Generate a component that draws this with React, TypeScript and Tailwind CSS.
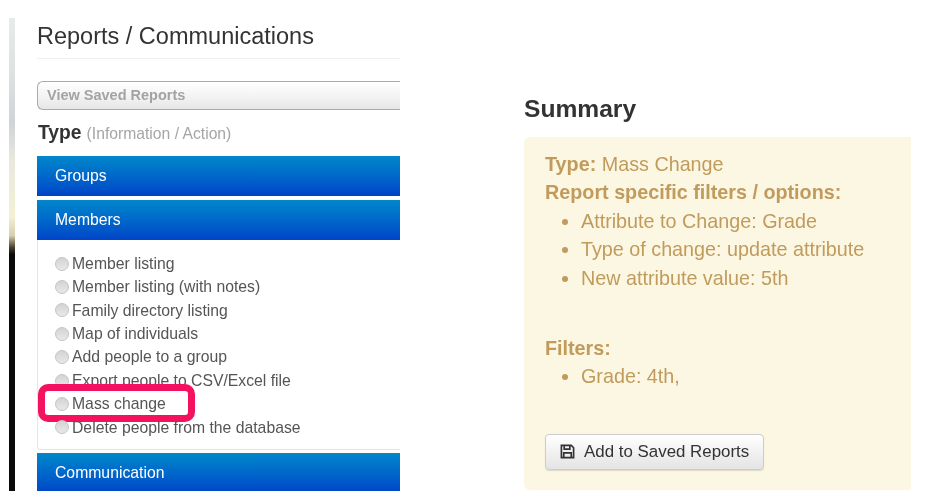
const memberReports = [
  "Member listing",
  "Member listing (with notes)",
  "Family directory listing",
  "Map of individuals",
  "Add people to a group",
  "Export people to CSV/Excel file",
  "Mass change",
  "Delete people from the database",
];

function CategoryBar({ label }: { label: string }) {
  return (
    <div className="flex h-[40px] shrink-0 items-center bg-gradient-to-b from-[#0487cb] to-[#0043c8] pl-[18px] text-[15.75px] text-white">
      {label}
    </div>
  );
}

function Radio() {
  return (
    <span className="h-[14px] w-[14px] shrink-0 rounded-full border border-[#c4c4c4] bg-gradient-to-b from-[#d4d4d4] to-[#e8e8e8]" />
  );
}

export default function App() {
  return (
    <div className="flex h-[502px] w-[925px] overflow-hidden bg-white pl-[9px] font-['Liberation_Sans',Arial,sans-serif] blur-[0.3px]">
      {/* background sliver */}
      <div className="mt-[18px] h-[473px] w-[6px] shrink-0 bg-[linear-gradient(to_bottom,#e6ece8_0%,#dde2e1_12%,#d0d3d8_22%,#e8e8de_30%,#f4f0d4_42%,#d6cfb0_46%,#4a4030_48.5%,#0a0a0a_50%,#0a0a0a_100%)]" />

      {/* LEFT */}
      <div className="ml-[22px] h-[491px] w-[363px] shrink-0 overflow-hidden">
        <h1 className="mt-[22px] h-[29px] text-[23.5px] leading-[29px] whitespace-nowrap text-[#333]">
          Reports / Communications
        </h1>
        <div className="mt-[7px] h-px bg-[#eeeeee]" />

        <div className="mt-[22px] flex h-[29px] items-center rounded-l-[6px] border border-r-0 border-[#aaaaaa] bg-gradient-to-b from-[#ffffff] via-[#f4f4f4] to-[#e6e6e6] pl-[9px] text-[14.5px] font-bold text-[#a3a3a3]">
          View Saved Reports
        </div>

        <div className="mt-[10px] flex h-[25px] items-baseline gap-[5px] pl-px leading-[25px] whitespace-nowrap">
          <span className="text-[19.3px] font-bold text-[#333]">Type</span>
          <span className="text-[15.7px] text-[#a5a5a5]">(Information / Action)</span>
        </div>

        <div className="mt-[11px]">
          <CategoryBar label="Groups" />
          <div className="mt-[4px]">
            <CategoryBar label="Members" />
          </div>
          <div className="h-[210px] rounded-bl-[4px] border-b border-l border-[#e6e6e6] pt-[12px] pl-[17px]">
            {memberReports.map((name) => (
              <div
                key={name}
                className="relative flex h-[23.4px] items-center gap-[3px] text-[15.75px] whitespace-nowrap text-[#555]"
              >
                <Radio />
                <span>{name}</span>
                {name === "Mass change" && (
                  <span className="absolute top-[-8px] left-[-17px] h-[38px] w-[157px] rounded-[10px] border-[7px] border-[#f4115f]" />
                )}
              </div>
            ))}
          </div>
          <div className="mt-[3px]">
            <CategoryBar label="Communication" />
          </div>
        </div>
      </div>

      {/* RIGHT */}
      <div className="ml-[124px] w-[387px] shrink-0">
        <h2 className="mt-[95px] h-[28px] text-[24.6px] leading-[28px] font-bold text-[#333]">Summary</h2>
        <div className="mt-[14px] h-[353px] rounded-l-[6px] bg-[#fcf7e2] pt-[13px] pl-[21px] text-[19.75px] leading-[28.4px] text-[#c19b5c]">
          <div>
            <b>Type:</b> Mass Change
          </div>
          <div className="font-bold">Report specific filters / options:</div>
          <ul className="list-disc pl-[36px]">
            <li>Attribute to Change: Grade</li>
            <li>Type of change: update attribute</li>
            <li>New attribute value: 5th</li>
          </ul>
          <div className="mt-[42px] font-bold">Filters:</div>
          <ul className="list-disc pl-[36px]">
            <li>Grade: 4th,</li>
          </ul>
          <button className="mt-[43px] flex h-[36px] w-[219px] items-center gap-[9px] rounded-[4px] border border-[#cccccc] bg-gradient-to-b from-[#ffffff] to-[#e4e4e4] pl-[14px] text-[16.9px] text-[#333] shadow-[0_1px_1px_rgba(0,0,0,0.12)]">
            <svg width="15" height="15" viewBox="0 0 16 16" fill="none" stroke="#333" strokeWidth="1.8">
              <path d="M1.5 1.5h10.5l2.5 2.5v10.5h-13z" />
              <path d="M4.5 1.5v4h6v-4" />
              <path d="M4 14.5v-5h8v5" />
            </svg>
            Add to Saved Reports
          </button>
        </div>
      </div>
    </div>
  );
}
